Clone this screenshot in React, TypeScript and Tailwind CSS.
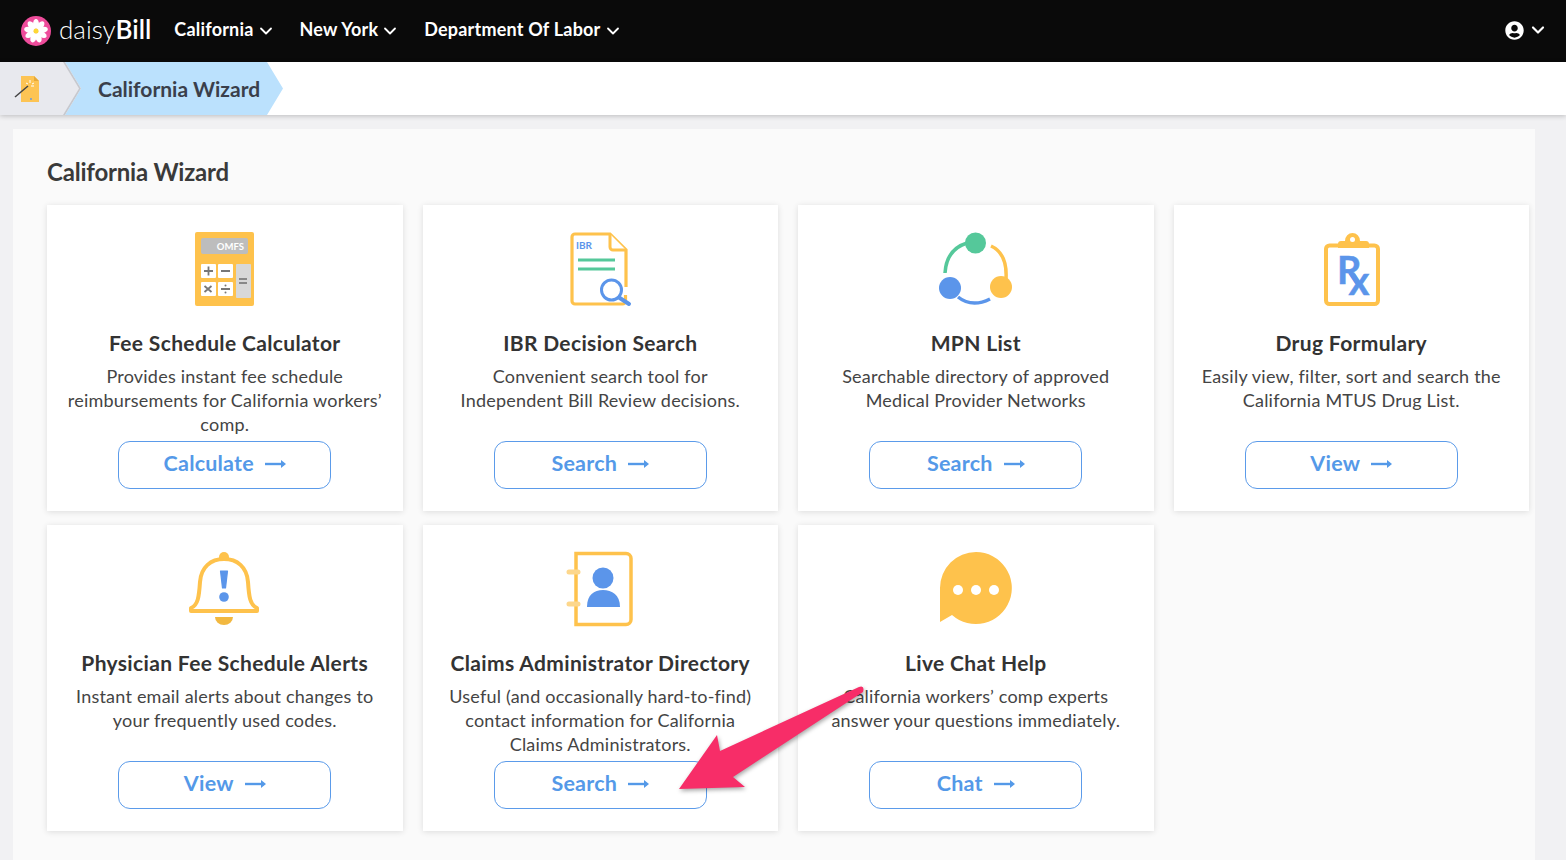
import { ChevronDown } from 'lucide-react';
import type { ReactNode } from 'react';
import { FaUserCircle } from 'react-icons/fa';

const YELLOW = '#fec24c';
const BLUE = '#5b95ea';
const GREEN = '#55c89a';

function CalculatorIcon() {
  return (
    <svg viewBox="0 0 90 90" className="h-[90px] w-[90px]">
      <rect x="15" y="7" width="59" height="74" rx="2" fill={YELLOW} />
      <rect x="21" y="13" width="47" height="16" rx="2" fill="#bdbdbd" />
      <text x="64" y="25" textAnchor="end" fontSize="9.500" fontWeight="700" fill="#fff" fontFamily="Lato, sans-serif">OMFS</text>
      <rect x="21" y="39" width="15" height="14" rx="1" fill="#fff" />
      <rect x="38" y="39" width="15" height="14" rx="1" fill="#fff" />
      <rect x="21" y="57" width="15" height="14" rx="1" fill="#fff" />
      <rect x="38" y="57" width="15" height="14" rx="1" fill="#fff" />
      <rect x="56" y="39" width="15" height="34" rx="1" fill="#d8d8d8" />
      <path d="M24 46h9M28.500 41.500v9M41 46h9M24.500 61l7 6M31.500 61l-7 6M41 64h9" stroke="#777" strokeWidth="1.800" />
      <circle cx="45.500" cy="60.500" r="1" fill="#777" />
      <circle cx="45.500" cy="67.500" r="1" fill="#777" />
      <path d="M59 54h8M59 58h8" stroke="#888" strokeWidth="1.800" />
    </svg>
  );
}

function IbrIcon() {
  return (
    <svg viewBox="0 0 90 90" className="h-[90px] w-[90px]">
      <path d="M20 9h35l16 16v37M70.500 70v6a3 3 0 0 1-3 3H20a3 3 0 0 1-3-3V12a3 3 0 0 1 3-3" fill="#fff" stroke={YELLOW} strokeWidth="3.200" />
      <path d="M55 9v13a3 3 0 0 0 3 3h13" fill="#fff" stroke={YELLOW} strokeWidth="3" />
      <text x="21" y="24" fontSize="10" fontWeight="700" fill={BLUE} fontFamily="Lato, sans-serif">IBR</text>
      <path d="M23 35h37M23 44h37" stroke={GREEN} strokeWidth="3" />
      <circle cx="56.500" cy="65" r="10" fill="#fff" stroke={BLUE} strokeWidth="3" />
      <path d="M64 72.500l10 6.500" stroke={BLUE} strokeWidth="4" strokeLinecap="round" />
    </svg>
  );
}

function NetworkIcon() {
  return (
    <svg viewBox="1 0 90 90" className="h-[90px] w-[90px]">
      <path d="M15 48C16 32 24 22 37 18" fill="none" stroke={GREEN} strokeWidth="3.500" />
      <path d="M61 21C72 26 77 38 76 54" fill="none" stroke={YELLOW} strokeWidth="3.500" />
      <path d="M28 72C38 80 50 79 60 74" fill="none" stroke={BLUE} strokeWidth="3.500" />
      <circle cx="45.500" cy="18" r="10.500" fill={GREEN} />
      <circle cx="20" cy="63" r="11" fill={BLUE} />
      <circle cx="71" cy="62" r="11" fill={YELLOW} />
    </svg>
  );
}

function RxIcon() {
  return (
    <svg viewBox="0 0 90 90" className="h-[90px] w-[90px]">
      <rect x="20" y="20.500" width="52" height="58.500" rx="3.500" fill="#fff" stroke={YELLOW} strokeWidth="4" />
      <path d="M32 23v-4a3 3 0 0 1 3-3h4a7.500 8 0 0 1 15 0h6a3 3 0 0 1 3 3v4z" fill={YELLOW} />
      <circle cx="46.500" cy="14.500" r="2.500" fill="#fff" />
      <text x="31" y="59" fontSize="38" fontWeight="700" fill={BLUE} stroke={BLUE} strokeWidth="0.500" fontFamily="Lato, sans-serif">
        R
        <tspan dx="-13" dy="11" fontSize="40">x</tspan>
      </text>
    </svg>
  );
}

function BellIcon() {
  return (
    <svg viewBox="0 0 90 90" className="h-[90px] w-[90px]">
      <path d="M11 66v-3c7-3 8-11 9-26 1-15 11-23 24-23s23 8 24 23c1 15 2 23 9 26v3z" fill="#fff" stroke={YELLOW} strokeWidth="4" strokeLinejoin="round" />
      <path d="M39 12a5 5 0 0 1 10 0v3H39z" fill={YELLOW} />
      <path d="M40.500 26h7l-2 17h-3z" fill={BLUE} stroke={BLUE} strokeWidth="1.200" strokeLinejoin="round" />
      <circle cx="44" cy="52" r="4.800" fill={BLUE} />
      <path d="M35 72h18a9 8 0 0 1-18 0z" fill="#f2b840" />
    </svg>
  );
}

function DirectoryIcon() {
  return (
    <svg viewBox="1 0 90 90" className="h-[90px] w-[90px]">
      <path d="M22 8.500h50a5 5 0 0 1 5 5v61a5 5 0 0 1-5 5H22z" fill="#fff" stroke={YELLOW} strokeWidth="3.500" />
      <path d="M15 27h9M15 59h9" stroke="#fdd78c" strokeWidth="5" strokeLinecap="round" />
      <circle cx="49" cy="33" r="10.500" fill={BLUE} />
      <path d="M33 62c0-12 7-17 16-17s17 5 17 17z" fill={BLUE} />
    </svg>
  );
}

function ChatIcon() {
  return (
    <svg viewBox="1 0 90 90" className="h-[90px] w-[90px]">
      <path d="M46 7a36 36 0 1 1-24 63l-12 7V43A36 36 0 0 1 46 7z" fill={YELLOW} />
      <circle cx="28" cy="45" r="5" fill="#fff" />
      <circle cx="46" cy="45" r="5" fill="#fff" />
      <circle cx="64" cy="45" r="5" fill="#fff" />
    </svg>
  );
}

function LongArrow() {
  return (
    <svg viewBox="0 0 21 10" className="h-[10px] w-[21px]">
      <path d="M0 5h19" stroke="currentColor" strokeWidth="2.400" />
      <path d="M16 1l5 4-5 4z" fill="currentColor" />
    </svg>
  );
}

function DaisyLogo() {
  const petals = [0, 40, 80, 120, 160, 200, 240, 280, 320];
  return (
    <svg viewBox="0 0 30 30" className="h-[30px] w-[30px]">
      <circle cx="15" cy="15" r="15" fill="#ee4c9b" />
      {petals.map((a) => (
        <ellipse key={a} cx="15" cy="8" rx="3" ry="5" fill="#fff" transform={`rotate(${a} 15 15)`} />
      ))}
      <circle cx="15" cy="15" r="2.500" fill="#fdd835" />
    </svg>
  );
}

function WizardCrumbIcon() {
  return (
    <svg viewBox="0 0 30 30" className="h-[30px] w-[30px]">
      <path d="M8 2h13l5 5v21H8z" fill="#fdc454" />
      <path d="M21 2l5 5h-5z" fill="#e5a93a" />
      <path d="M2 23L15 12" stroke="#444" strokeWidth="1.500" />
      <path d="M17 6v3M13 9l2 1M21 9l-2 1M18 12h3" stroke="#fff" strokeWidth="1" />
      <circle cx="18" cy="25" r="0.900" fill={BLUE} />
    </svg>
  );
}

function NavItem({ label }: { label: string }) {
  return (
    <button type="button" className="flex items-center gap-[2px] pb-[3px] text-[18px] font-bold tracking-[0.2px] text-white">
      {label}
      <ChevronDown size={20} strokeWidth={2.200} className="mt-[3px]" />
    </button>
  );
}

type CardProps = {
  icon: ReactNode;
  title: string;
  lines: string[];
  action: string;
};

function Card({ icon, title, lines, action }: CardProps) {
  return (
    <div className="flex h-[306px] flex-col items-center bg-white pt-5 shadow-[0_1px_6px_rgba(0,0,0,0.12)]">
      {icon}
      <h3 className="mt-[14px] text-[21px] leading-7 font-bold tracking-[0.35px] text-[#333]">{title}</h3>
      <div className="mt-[7px] h-[77px] text-center text-[18px] leading-6 tracking-[0.22px] text-[#444]">
        {lines.map((l) => (
          <p key={l}>{l}</p>
        ))}
      </div>
      <button
        type="button"
        className="flex h-12 w-[213px] items-center justify-center gap-[11px] rounded-xl border border-[#5b9bea] bg-white pb-[3px] text-[21.500px] font-bold tracking-[0.2px] text-[#5499e8]"
      >
        {action}
        <LongArrow />
      </button>
    </div>
  );
}

const cards: CardProps[] = [
  {
    icon: <CalculatorIcon />,
    title: 'Fee Schedule Calculator',
    lines: ['Provides instant fee schedule', 'reimbursements for California workers’', 'comp.'],
    action: 'Calculate',
  },
  {
    icon: <IbrIcon />,
    title: 'IBR Decision Search',
    lines: ['Convenient search tool for', 'Independent Bill Review decisions.'],
    action: 'Search',
  },
  {
    icon: <NetworkIcon />,
    title: 'MPN List',
    lines: ['Searchable directory of approved', 'Medical Provider Networks'],
    action: 'Search',
  },
  {
    icon: <RxIcon />,
    title: 'Drug Formulary',
    lines: ['Easily view, filter, sort and search the', 'California MTUS Drug List.'],
    action: 'View',
  },
  {
    icon: <BellIcon />,
    title: 'Physician Fee Schedule Alerts',
    lines: ['Instant email alerts about changes to', 'your frequently used codes.'],
    action: 'View',
  },
  {
    icon: <DirectoryIcon />,
    title: 'Claims Administrator Directory',
    lines: ['Useful (and occasionally hard-to-find)', 'contact information for California', 'Claims Administrators.'],
    action: 'Search',
  },
  {
    icon: <ChatIcon />,
    title: 'Live Chat Help',
    lines: ['California workers’ comp experts', 'answer your questions immediately.'],
    action: 'Chat',
  },
];

export default function App() {
  return (
    <div className="relative h-[860px] overflow-hidden bg-[#f1f1f3] font-['Lato',sans-serif]">
      <header className="flex h-[62px] items-center bg-[#0a0a0a] pr-[18px] pl-[21px]">
        <DaisyLogo />
        <div className="ml-2 pb-[5px] text-[26px] leading-none text-white">
          <span className="font-light">daisy</span>
          <span className="font-semibold">Bill</span>
        </div>
        <nav className="ml-[23px] flex items-center gap-6">
          <NavItem label="California" />
          <NavItem label="New York" />
          <NavItem label="Department Of Labor" />
        </nav>
        <div className="ml-auto flex items-center gap-1 pb-[2px] text-white">
          <FaUserCircle size={19} />
          <ChevronDown size={20} strokeWidth={2.600} />
        </div>
      </header>

      <div className="flex h-[53px] bg-white shadow-[0_1px_5px_rgba(0,0,0,0.22)]">
        <div className="relative z-10 -mr-4 w-[81px] bg-[#c6c8ce] [clip-path:polygon(0_0,65px_0,81px_50%,65px_100%,0_100%)]">
          <div className="flex h-full w-[79px] items-center bg-[#e8e9ee] pl-[13px] [clip-path:polygon(0_0,63px_0,79px_50%,63px_100%,0_100%)]">
            <WizardCrumbIcon />
          </div>
        </div>
        <div className="flex w-[218px] items-center bg-[#bbe1fd] pl-[33px] text-[21px] font-bold text-[#3a3f4b] [clip-path:polygon(0_0,202px_0,218px_50%,202px_100%,0_100%,16px_50%)]">
          California Wizard
        </div>
      </div>

      <main className="mt-[14px] ml-[13px] h-[731px] w-[1522px] bg-[#fafafa] pt-[28px] pr-[6px] pl-[34px]">
        <h1 className="text-[24px] leading-[30px] font-bold tracking-[-0.2px] text-[#3a3a3a]">California Wizard</h1>
        <div className="mt-[18px] grid grid-cols-4 gap-x-5 gap-y-[14px]">
          {cards.map((c) => (
            <Card key={c.title} {...c} />
          ))}
        </div>
      </main>

      {/* annotation arrow drawn on top of the screenshot */}
      <svg viewBox="0 0 1566 860" className="pointer-events-none absolute inset-0 h-[860px] w-[1566px] drop-shadow-[1px_2px_2px_rgba(0,0,0,0.35)]">
        <path d="M859 687L720 751L717 735L679 789L745 787L733 777L863 692Q865 685 859 687z" fill="#f72d68" />
      </svg>
    </div>
  );
}
